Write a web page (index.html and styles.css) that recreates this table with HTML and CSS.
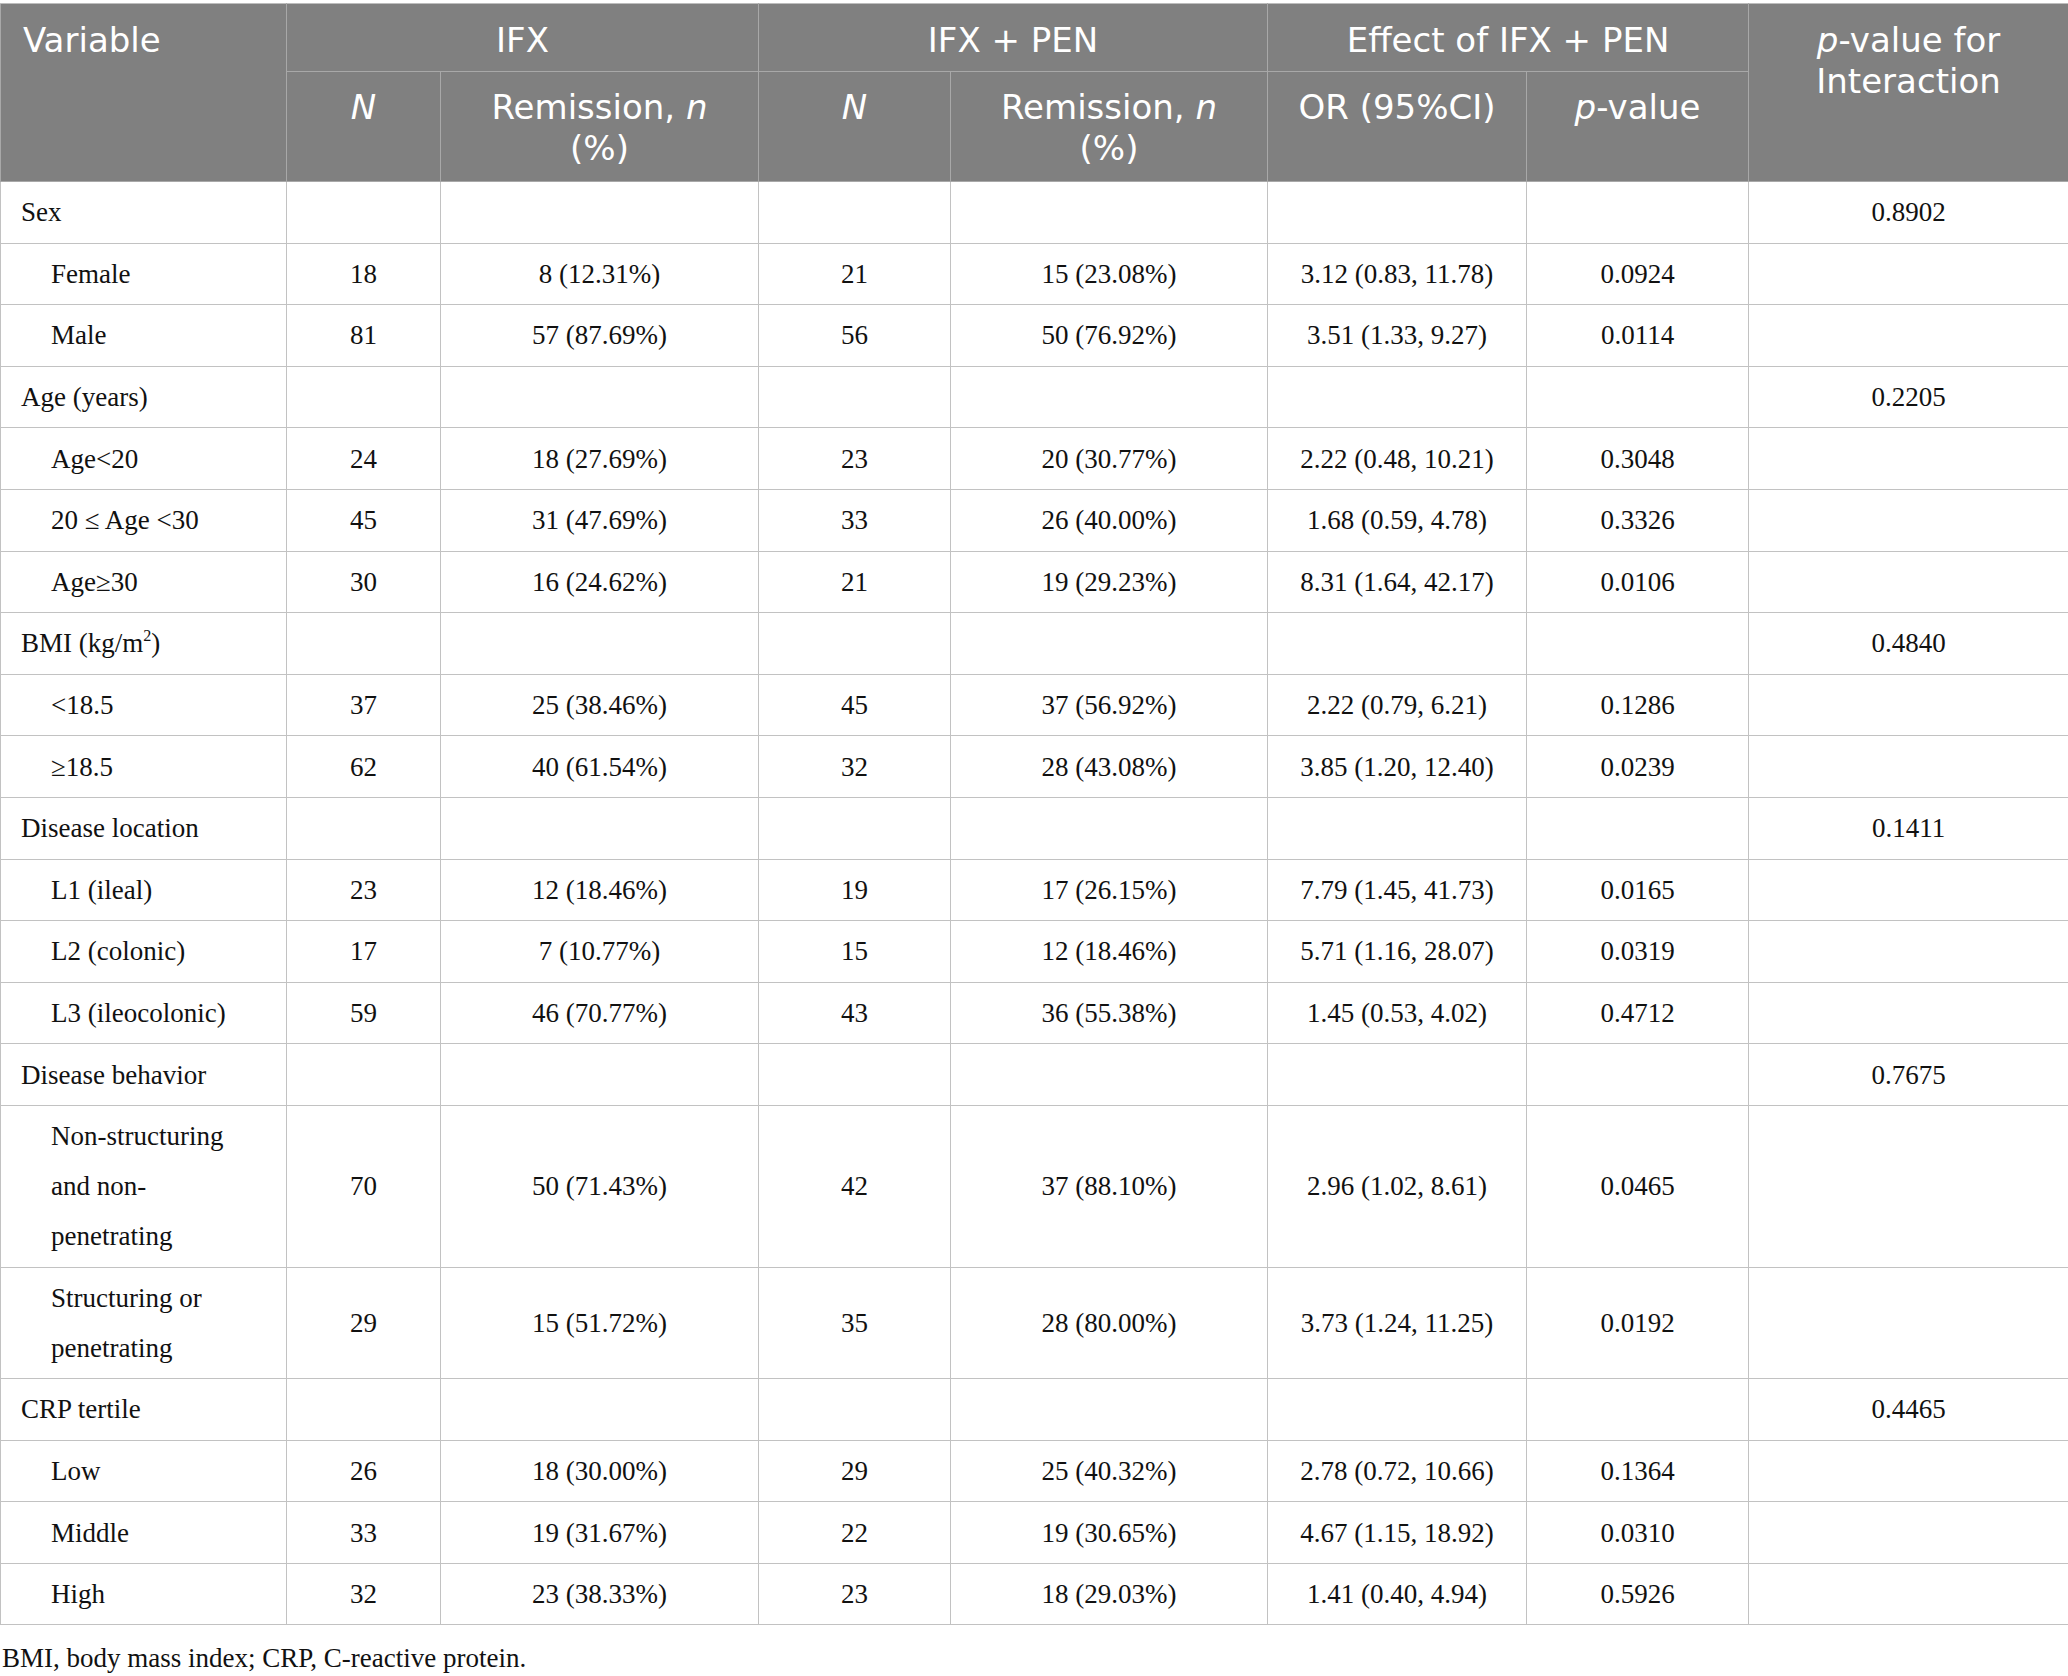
FILE: index.html
```html
<!DOCTYPE html>
<html lang="en">
<head>
    <meta charset="UTF-8">
    <meta name="viewport" content="width=device-width, initial-scale=1.0">
    <title>Subgroup analysis</title>
    <link rel="stylesheet" href="styles.css">
</head>
<body>
    <table class="data-table">
        <colgroup>
            <col class="c-var">
            <col class="c-n">
            <col class="c-rem">
            <col class="c-n2">
            <col class="c-rem2">
            <col class="c-or">
            <col class="c-p">
            <col class="c-int">
        </colgroup>
        <thead>
            <tr>
                <th rowspan="2" class="left">Variable</th>
                <th colspan="2">IFX</th>
                <th colspan="2">IFX + PEN</th>
                <th colspan="2">Effect of IFX + PEN</th>
                <th rowspan="2"><i>p</i>-value for Interaction</th>
            </tr>
            <tr>
                <th><i>N</i></th>
                <th>Remission, <i>n</i> (%)</th>
                <th><i>N</i></th>
                <th>Remission, <i>n</i> (%)</th>
                <th>OR (95%CI)</th>
                <th><i>p</i>-value</th>
            </tr>
        </thead>
        <tbody>
            <!-- Sex -->
            <tr class="group"><td>Sex</td><td></td><td></td><td></td><td></td><td></td><td></td><td>0.8902</td></tr>
            <tr><td class="sub">Female</td><td>18</td><td>8 (12.31%)</td><td>21</td><td>15 (23.08%)</td><td>3.12 (0.83, 11.78)</td><td>0.0924</td><td></td></tr>
            <tr><td class="sub">Male</td><td>81</td><td>57 (87.69%)</td><td>56</td><td>50 (76.92%)</td><td>3.51 (1.33, 9.27)</td><td>0.0114</td><td></td></tr>

            <!-- Age -->
            <tr class="group"><td>Age (years)</td><td></td><td></td><td></td><td></td><td></td><td></td><td>0.2205</td></tr>
            <tr><td class="sub">Age&lt;20</td><td>24</td><td>18 (27.69%)</td><td>23</td><td>20 (30.77%)</td><td>2.22 (0.48, 10.21)</td><td>0.3048</td><td></td></tr>
            <tr><td class="sub">20 ≤ Age &lt;30</td><td>45</td><td>31 (47.69%)</td><td>33</td><td>26 (40.00%)</td><td>1.68 (0.59, 4.78)</td><td>0.3326</td><td></td></tr>
            <tr><td class="sub">Age≥30</td><td>30</td><td>16 (24.62%)</td><td>21</td><td>19 (29.23%)</td><td>8.31 (1.64, 42.17)</td><td>0.0106</td><td></td></tr>

            <!-- BMI -->
            <tr class="group"><td>BMI (kg/m<sup>2</sup>)</td><td></td><td></td><td></td><td></td><td></td><td></td><td>0.4840</td></tr>
            <tr><td class="sub">&lt;18.5</td><td>37</td><td>25 (38.46%)</td><td>45</td><td>37 (56.92%)</td><td>2.22 (0.79, 6.21)</td><td>0.1286</td><td></td></tr>
            <tr><td class="sub">≥18.5</td><td>62</td><td>40 (61.54%)</td><td>32</td><td>28 (43.08%)</td><td>3.85 (1.20, 12.40)</td><td>0.0239</td><td></td></tr>

            <!-- Disease location -->
            <tr class="group"><td>Disease location</td><td></td><td></td><td></td><td></td><td></td><td></td><td>0.1411</td></tr>
            <tr><td class="sub">L1 (ileal)</td><td>23</td><td>12 (18.46%)</td><td>19</td><td>17 (26.15%)</td><td>7.79 (1.45, 41.73)</td><td>0.0165</td><td></td></tr>
            <tr><td class="sub">L2 (colonic)</td><td>17</td><td>7 (10.77%)</td><td>15</td><td>12 (18.46%)</td><td>5.71 (1.16, 28.07)</td><td>0.0319</td><td></td></tr>
            <tr><td class="sub">L3 (ileocolonic)</td><td>59</td><td>46 (70.77%)</td><td>43</td><td>36 (55.38%)</td><td>1.45 (0.53, 4.02)</td><td>0.4712</td><td></td></tr>

            <!-- Disease behavior -->
            <tr class="group"><td>Disease behavior</td><td></td><td></td><td></td><td></td><td></td><td></td><td>0.7675</td></tr>
            <tr><td class="sub">Non-structuring and non-penetrating</td><td>70</td><td>50 (71.43%)</td><td>42</td><td>37 (88.10%)</td><td>2.96 (1.02, 8.61)</td><td>0.0465</td><td></td></tr>
            <tr><td class="sub">Structuring or penetrating</td><td>29</td><td>15 (51.72%)</td><td>35</td><td>28 (80.00%)</td><td>3.73 (1.24, 11.25)</td><td>0.0192</td><td></td></tr>

            <!-- CRP -->
            <tr class="group"><td>CRP tertile</td><td></td><td></td><td></td><td></td><td></td><td></td><td>0.4465</td></tr>
            <tr><td class="sub">Low</td><td>26</td><td>18 (30.00%)</td><td>29</td><td>25 (40.32%)</td><td>2.78 (0.72, 10.66)</td><td>0.1364</td><td></td></tr>
            <tr><td class="sub">Middle</td><td>33</td><td>19 (31.67%)</td><td>22</td><td>19 (30.65%)</td><td>4.67 (1.15, 18.92)</td><td>0.0310</td><td></td></tr>
            <tr><td class="sub">High</td><td>32</td><td>23 (38.33%)</td><td>23</td><td>18 (29.03%)</td><td>1.41 (0.40, 4.94)</td><td>0.5926</td><td></td></tr>
        </tbody>
    </table>

    <p class="note">BMI, body mass index; CRP, C-reactive protein.</p>
</body>
</html>
```

FILE: styles.css
```css
body {
    margin: 0;
    padding-top: 3px;
    background-color: #fff;
    color: #111;
    font-family: "Liberation Serif", "Times New Roman", serif;
    font-size: 27px;
}
.data-table {
    width: 2068px;
    table-layout: fixed;
    border-collapse: collapse;
}
.c-var { width: 286px; }
.c-n { width: 154px; }
.c-rem { width: 318px; }
.c-n2 { width: 192px; }
.c-rem2 { width: 317px; }
.c-or { width: 259px; }
.c-p { width: 222px; }
.c-int { width: 320px; }

/* header */
th {
    background-color: #808080;
    color: #fff;
    font-family: "DejaVu Sans", "Open Sans", sans-serif;
    font-weight: normal;
    font-size: 34px;
    line-height: 41px;
    text-align: center;
    vertical-align: top;
    padding: 16px 20px 10px;
    border: 1px solid #a8a8a8;
}
thead tr:first-child th {
    border-top-color: #bdbdbd;
}
thead tr:nth-child(2) th {
    padding: 15px 20px 12px;
}
th.left {
    text-align: left;
    padding-left: 22px;
}
th i {
    font-style: italic;
    font-weight: normal;
}

/* body */
td {
    border: 1px solid #c2c2c2;
    line-height: 50px;
    padding: 5.3px 20px;
    text-align: center;
    vertical-align: middle;
}
td:first-child {
    text-align: left;
    padding-right: 28px;
}
td.sub {
    padding-left: 50px;
}
sup {
    font-size: 60%;
    line-height: 0;
    vertical-align: 0.7em;
}
.note {
    margin: 8px 0 0 2px;
    line-height: 50px;
}
```
